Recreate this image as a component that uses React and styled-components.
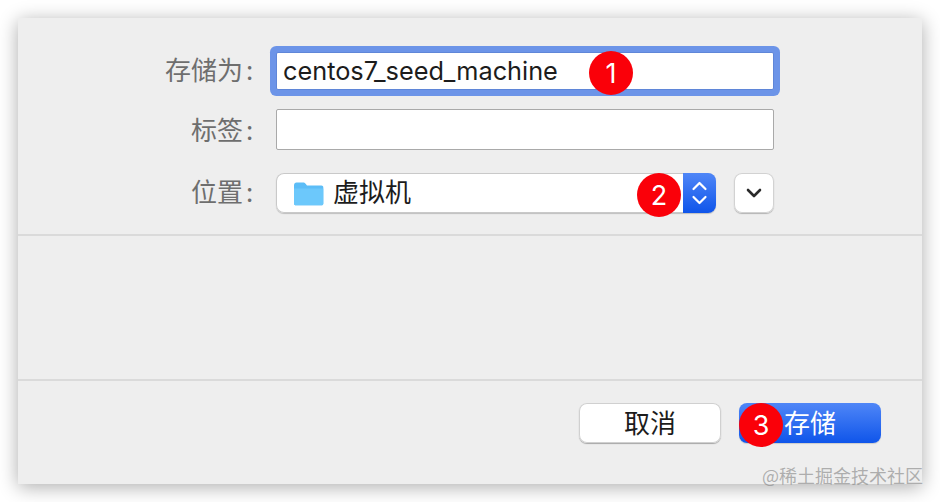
import React from "react";
import styled, { createGlobalStyle } from "styled-components";

const Global = createGlobalStyle`
  html, body {
    margin: 0;
    background: #fff;
  }
  * {
    box-sizing: border-box;
  }
`;

const Page = styled.div`
  width: 940px;
  height: 502px;
  padding: 18px;
  overflow: hidden;
  font-family: Inter, "Noto Sans CJK SC", sans-serif;
`;

const Dialog = styled.div`
  position: relative;
  width: 904px;
  height: 466px;
  background: #eeeeee;
  box-shadow: 0 3px 18px rgba(0, 0, 0, 0.33);
  display: flex;
  flex-direction: column;
`;

const Form = styled.div`
  height: 218px;
  padding: 34px 148px 0 0;
  border-bottom: 2px solid #dadada;
  display: flex;
  flex-direction: column;
`;

const Row = styled.div`
  display: flex;
  align-items: center;
  height: ${(p) => p.$h}px;
  margin-bottom: ${(p) => p.$mb}px;
`;

const Label = styled.div`
  width: 238px;
  flex: none;
  padding-bottom: ${(p) => p.$shift}px;
  text-align: right;
  font-size: 26px;
  color: #6e6e6e;
  font-family: "Noto Sans CJK SC", sans-serif;
  line-height: 1;
`;

const Colon = styled.span`
  display: inline-block;
  width: 13px;
  text-align: center;
`;

const Field = styled.div`
  margin-left: 20px;
  width: 498px;
  height: ${(p) => p.$h}px;
  background: #fff;
  display: flex;
  align-items: center;
  padding: 0 0 1px 6px;
  font-size: 25.3px;
  color: #1c1c1c;
  border: ${(p) => (p.$focus ? "1px solid #5f86d8" : "1px solid #a9a9a9")};
  box-shadow: ${(p) => (p.$focus ? "0 0 0 6px #6c94e8" : "none")};
  border-radius: 2px;
`;

const Select = styled.div`
  margin-left: 20px;
  width: 440px;
  height: 40px;
  background: #fff;
  border-radius: 8px;
  box-shadow: inset 0 0 0 1px #c9c9c9, 0 1px 1px rgba(0, 0, 0, 0.2);
  display: flex;
  align-items: center;
  overflow: hidden;
`;

const SelectText = styled.div`
  flex: 1;
  display: flex;
  align-items: center;
  gap: 9px;
  padding-left: 17px;
  font-size: 26px;
  line-height: 1;
  color: #1c1c1c;
  font-family: "Noto Sans CJK SC", sans-serif;
`;

const SelectLabel = styled.span`
  padding-bottom: 4px;
`;

const Stepper = styled.div`
  width: 33px;
  height: 40px;
  background: linear-gradient(#4f86f7, #0f55ea);
  display: flex;
  align-items: center;
  justify-content: center;
`;

const MoreButton = styled.div`
  margin-left: 18px;
  width: 40px;
  height: 40px;
  background: #fff;
  border-radius: 8px;
  box-shadow: inset 0 0 0 1px #d2d2d2, 0 1px 1px rgba(0, 0, 0, 0.25);
  display: flex;
  align-items: center;
  justify-content: center;
`;

const Middle = styled.div`
  height: 145px;
  border-bottom: 2px solid #dadada;
`;

const Footer = styled.div`
  flex: 1;
  display: flex;
  justify-content: flex-end;
  gap: 18px;
  padding: 22px 41px 0 0;
`;

const Button = styled.div`
  width: 142px;
  height: 40px;
  padding-bottom: 4px;
  border-radius: 8px;
  display: flex;
  align-items: center;
  justify-content: center;
  font-size: 26px;
  font-family: "Noto Sans CJK SC", sans-serif;
  background: ${(p) => (p.$primary ? "linear-gradient(#4f86f7, #0f55ea)" : "#fff")};
  color: ${(p) => (p.$primary ? "#fff" : "#1c1c1c")};
  box-shadow: ${(p) =>
    p.$primary
      ? "0 1px 1px rgba(0, 0, 0, 0.15)"
      : "inset 0 0 0 1px #d0d0d0, 0 1px 1px rgba(0, 0, 0, 0.3)"};
`;

const Badge = styled.div`
  position: absolute;
  left: ${(p) => p.$x - 22 - 18}px;
  top: ${(p) => p.$y - 22 - 18}px;
  width: 44px;
  height: 44px;
  border-radius: 50%;
  background: #fa0009;
  color: #fff;
  font-size: 27px;
  font-family: Inter, sans-serif;
  display: flex;
  align-items: center;
  justify-content: center;
`;

const Watermark = styled.div`
  position: absolute;
  right: -1px;
  bottom: -1px;
  font-size: 18px;
  line-height: 20px;
  color: rgba(130, 130, 130, 0.6);
  font-family: "Noto Sans CJK SC", sans-serif;
  white-space: nowrap;
`;

function Folder() {
  return (
    <svg width="31" height="25" viewBox="0 0 31 25">
      <path
        d="M1 4.5C1 2.5 2 1.5 3.5 1.5H10c1.2 0 1.8.4 2.6 1.3L14 4.5h14.5c1 0 1.8.8 1.8 1.8v16.2c0 1-.8 1.8-1.8 1.8H2.8c-1 0-1.8-.8-1.8-1.8z"
        fill="#5cbdf7"
      />
      <path
        d="M1 7.5h29.3v15c0 1-.8 1.8-1.8 1.8H2.8c-1 0-1.8-.8-1.8-1.8z"
        fill="#6cc8fb"
      />
    </svg>
  );
}

function Arrows() {
  return (
    <svg width="17" height="26" viewBox="0 0 17 26" fill="none" stroke="#fff" strokeWidth="2.2" strokeLinecap="round" strokeLinejoin="round">
      <path d="M2.5 9L8.5 3l6 6" />
      <path d="M2.5 17l6 6 6-6" />
    </svg>
  );
}

function Chevron() {
  return (
    <svg width="16" height="10" viewBox="0 0 16 10" fill="none" stroke="#2a2a2a" strokeWidth="2.6" strokeLinecap="round" strokeLinejoin="round">
      <path d="M2 2l6 6 6-6" />
    </svg>
  );
}

export default function App() {
  return (
    <Page>
      <Global />
      <Dialog>
        <Form>
          <Row $h={38} $mb={19}>
            <Label $shift={4}>存储为<Colon>:</Colon></Label>
            <Field $h={38} $focus>centos7_seed_machine</Field>
          </Row>
          <Row $h={41} $mb={23}>
            <Label $shift={2}>标签<Colon>:</Colon></Label>
            <Field $h={41} />
          </Row>
          <Row $h={40} $mb={0}>
            <Label $shift={4}>位置<Colon>:</Colon></Label>
            <Select>
              <SelectText>
                <Folder />
                <SelectLabel>虚拟机</SelectLabel>
              </SelectText>
              <Stepper><Arrows /></Stepper>
            </Select>
            <MoreButton><Chevron /></MoreButton>
          </Row>
        </Form>
        <Middle />
        <Footer>
          <Button>取消</Button>
          <Button $primary>存储</Button>
        </Footer>
        <Badge $x={611} $y={73}>1</Badge>
        <Badge $x={659} $y={195}>2</Badge>
        <Badge $x={761} $y={425}>3</Badge>
        <Watermark>@稀土掘金技术社区</Watermark>
      </Dialog>
    </Page>
  );
}
